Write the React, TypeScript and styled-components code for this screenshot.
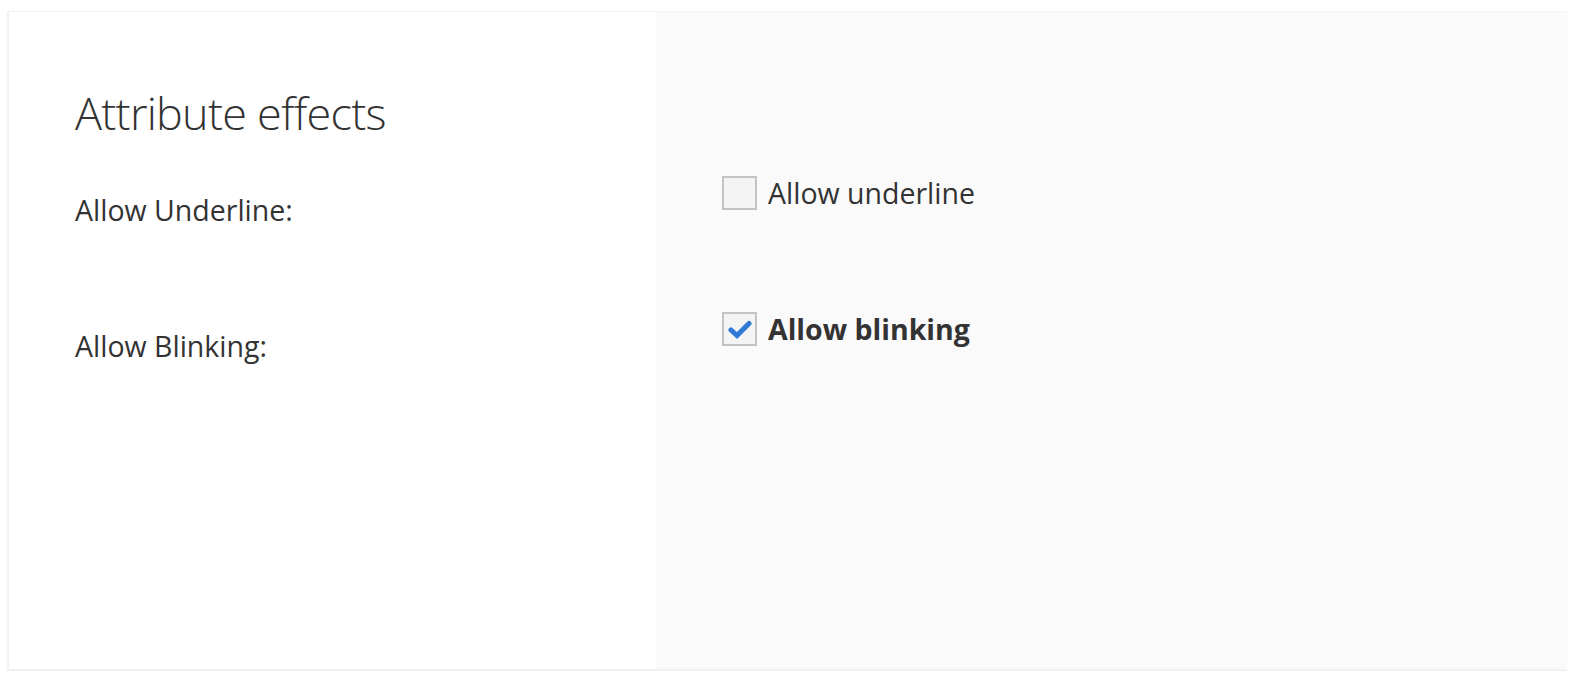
import React from "react";
import styled, { createGlobalStyle } from "styled-components";

const GlobalStyle = createGlobalStyle`
  html, body { margin: 0; padding: 0; background: #ffffff; }
  body { font-family: "Open Sans", "Noto Sans", sans-serif; color: #333333; }
`;

const Page = styled.div`
  padding: 11px 0 0 7px;
`;

const Card = styled.section`
  box-sizing: border-box;
  width: 1560px;
  height: 660px;
  display: flex;
  border-top: 1px solid #f3f3f3;
  border-left: 2px solid #f3f3f3;
  border-bottom: 2px solid #f1f1f1;
  background: #fafafa;
  box-shadow: 0 2px 3px rgba(0, 0, 0, 0.04);
`;

const LeftPanel = styled.div`
  box-sizing: border-box;
  width: 647px;
  flex: none;
  background: #ffffff;
  padding: 76px 0 0 66px;
  display: flex;
  flex-direction: column;
`;

const RightPanel = styled.div`
  flex: 1;
  box-sizing: border-box;
  padding: 161px 0 0 66px;
  display: flex;
  flex-direction: column;
  gap: 96px;
`;

const Title = styled.h2`
  margin: 0 0 52px;
  font-family: "Open Sans", sans-serif;
  font-weight: 300;
  font-size: 45px;
  line-height: 50px;
  color: #333333;
  letter-spacing: -0.75px;
`;

const LabelList = styled.div`
  display: flex;
  flex-direction: column;
  gap: 96px;
`;

const FieldLabel = styled.div`
  font-size: 28.5px;
  line-height: 40px;
  font-weight: 400;
  color: #333333;
`;

const CheckRow = styled.label`
  display: flex;
  align-items: center;
  gap: 11px;
  height: 40px;
  cursor: pointer;
`;

const Box = styled.span`
  box-sizing: border-box;
  width: 35px;
  height: 34px;
  border: 2px solid #c3c3c3;
  background: #f4f4f4;
  display: flex;
  align-items: center;
  justify-content: center;
  flex: none;
`;

const CheckText = styled.span<{ $checked?: boolean }>`
  font-size: 28.5px;
  line-height: 40px;
  font-weight: ${(p) => (p.$checked ? 700 : 400)};
  color: #333333;
`;

const CheckMark = () => (
  <svg width="24" height="19" viewBox="0 0 24 19" aria-hidden="true">
    <path
      d="M3 10 L9 15.5 L21 3.5"
      fill="none"
      stroke="#2d79d6"
      strokeWidth="5"
      strokeLinecap="round"
      strokeLinejoin="miter"
    />
  </svg>
);

const Checkbox = ({ label, checked }: { label: string; checked?: boolean }) => (
  <CheckRow>
    <Box>{checked ? <CheckMark /> : null}</Box>
    <CheckText $checked={checked}>{label}</CheckText>
  </CheckRow>
);

export default function App() {
  return (
    <>
      <GlobalStyle />
      <Page>
        <Card>
          <LeftPanel>
            <Title>Attribute effects</Title>
            <LabelList>
              <FieldLabel>Allow Underline:</FieldLabel>
              <FieldLabel>Allow Blinking:</FieldLabel>
            </LabelList>
          </LeftPanel>
          <RightPanel>
            <Checkbox label="Allow underline" />
            <Checkbox label="Allow blinking" checked />
          </RightPanel>
        </Card>
      </Page>
    </>
  );
}
